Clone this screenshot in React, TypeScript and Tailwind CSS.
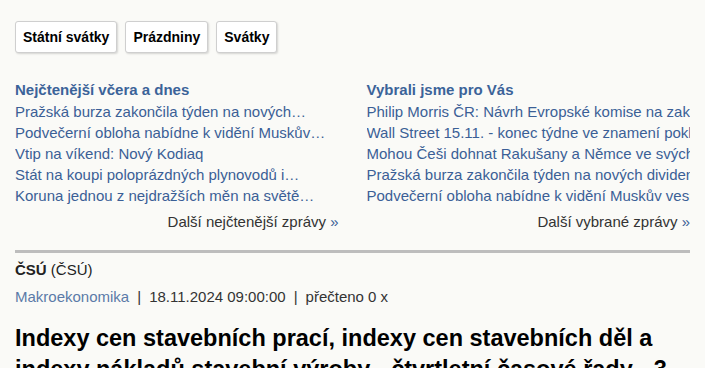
const mostRead = [
  'Pražská burza zakončila týden na nových…',
  'Podvečerní obloha nabídne k vidění Muskův…',
  'Vtip na víkend: Nový Kodiaq',
  'Stát na koupi poloprázdných plynovodů i…',
  'Koruna jednou z nejdražších měn na světě…',
];

const picked = [
  'Philip Morris ČR: Návrh Evropské komise na zakázku ochucených nikotinových sáčků',
  'Wall Street 15.11. - konec týdne ve znamení poklesu',
  'Mohou Češi dohnat Rakušany a Němce ve svých mzdách?',
  'Pražská burza zakončila týden na nových dividendových rekordech',
  'Podvečerní obloha nabídne k vidění Muskův vesmírný vláček',
];

const tabs = ['Státní svátky', 'Prázdniny', 'Svátky'];

export default function App() {
  return (
    <div className="min-h-screen bg-[#fafaf7] text-[15px] leading-[21px] text-[#222] overflow-hidden" style={{ fontFamily: '"Liberation Sans", Arial, sans-serif' }}>
      <div className="px-[15px] pt-[21px]">
        {/* Tabs */}
        <div className="flex gap-[8px]">
          {tabs.map((t) => (
            <button
              key={t}
              className="h-[32px] px-[7px] bg-white border border-[#cfcfcf] rounded-[3px] shadow-[1px_1px_2px_rgba(0,0,0,0.15)] font-bold text-[14px] text-black"
            >
              {t}
            </button>
          ))}
        </div>

        {/* News columns */}
        <div className="grid grid-cols-2 gap-[28px] mt-[26px]">
          <div className="min-w-0">
            <h3 className="font-bold text-[#3b6399] mb-[1px]">Nejčtenější včera a dnes</h3>
            <ul>
              {mostRead.map((item, i) => (
                <li key={i} className="whitespace-nowrap overflow-hidden text-[#3b5f96]">
                  <a href="#">{item}</a>
                </li>
              ))}
            </ul>
            <div className="text-right mt-[5px] text-[#333]">
              Další nejčtenější zprávy <span className="text-[#3b5f96]">»</span>
            </div>
          </div>
          <div className="min-w-0">
            <h3 className="font-bold text-[#3b6399] mb-[1px]">Vybrali jsme pro Vás</h3>
            <ul>
              {picked.map((item, i) => (
                <li key={i} className="whitespace-nowrap overflow-hidden text-[#3b5f96]">
                  <a href="#">{item}</a>
                </li>
              ))}
            </ul>
            <div className="text-right mt-[5px] text-[#333]">
              Další vybrané zprávy <span className="text-[#3b5f96]">»</span>
            </div>
          </div>
        </div>

        <div className="h-[3px] bg-[#bdbdbd] mt-[18px]" />

        {/* Article */}
        <div className="mt-[6px]">
          <b>ČSÚ</b> (ČSÚ)
        </div>
        <div className="mt-[6px] text-[#333]">
          <span className="text-[#5b7aa8]">Makroekonomika</span>
          <span className="mx-[8px]">|</span>18.11.2024 09:00:00
          <span className="mx-[8px]">|</span>přečteno 0 x
        </div>
        <h1 className="mt-[16px] text-[23.5px] leading-[31px] font-bold text-black">
          Indexy cen stavebních prací, indexy cen stavebních děl a indexy nákladů stavební výroby - čtvrtletní časové řady - 3. čtvrtletí 2024
        </h1>
      </div>
    </div>
  );
}
